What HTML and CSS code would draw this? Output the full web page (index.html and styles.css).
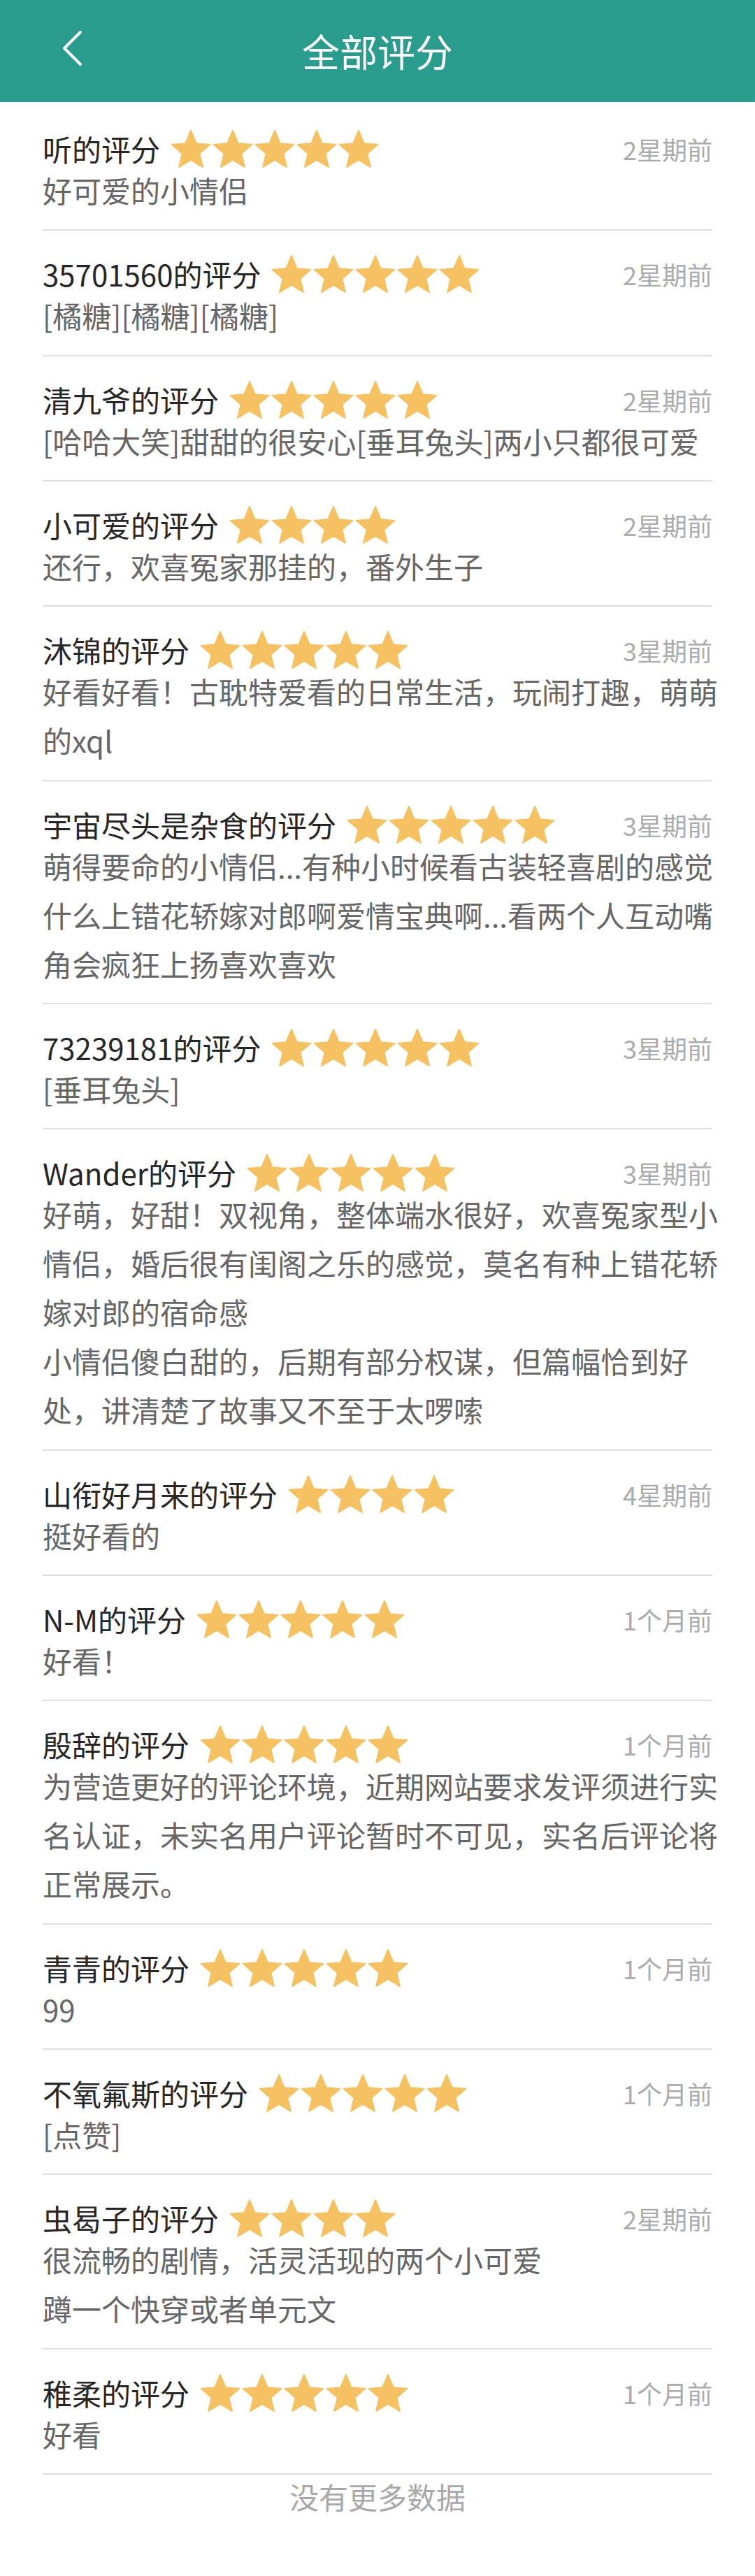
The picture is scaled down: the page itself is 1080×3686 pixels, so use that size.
FILE: index.html
```html
<!DOCTYPE html>
<html lang="zh-CN">
<head>
<meta charset="utf-8">
<title>全部评分</title>
<link rel="stylesheet" href="styles.css">
</head>
<body>
<svg width="0" height="0" class="defs" aria-hidden="true">
  <defs>
    <path id="star" d="M12 17.27L18.18 21l-1.64-7.03L22 9.24l-7.19-.61L12 2 9.19 8.63 2 9.24l5.46 4.73L5.82 21z"/>
  </defs>
</svg>
<header class="topbar">
  <div class="back">
    <svg width="40" height="60" viewBox="0 0 40 60"><polyline points="31,8 8,31 31,54" fill="none" stroke="#fff" stroke-width="4" stroke-linecap="round" stroke-linejoin="round"/></svg>
  </div>
  <h1 class="title">全部评分</h1>
  <div></div>
</header>

<main class="list">
  <div class="item">
    <div class="head"><span class="name">听的评分</span><span class="stars"><svg viewBox="1.2 1.4 21.6 20.2"><use href="#star"/></svg><svg viewBox="1.2 1.4 21.6 20.2"><use href="#star"/></svg><svg viewBox="1.2 1.4 21.6 20.2"><use href="#star"/></svg><svg viewBox="1.2 1.4 21.6 20.2"><use href="#star"/></svg><svg viewBox="1.2 1.4 21.6 20.2"><use href="#star"/></svg></span><span class="time">2星期前</span></div>
    <p class="content">好可爱的小情侣</p>
  </div>
  <div class="item">
    <div class="head"><span class="name">35701560的评分</span><span class="stars"><svg viewBox="1.2 1.4 21.6 20.2"><use href="#star"/></svg><svg viewBox="1.2 1.4 21.6 20.2"><use href="#star"/></svg><svg viewBox="1.2 1.4 21.6 20.2"><use href="#star"/></svg><svg viewBox="1.2 1.4 21.6 20.2"><use href="#star"/></svg><svg viewBox="1.2 1.4 21.6 20.2"><use href="#star"/></svg></span><span class="time">2星期前</span></div>
    <p class="content">[橘糖][橘糖][橘糖]</p>
  </div>
  <div class="item">
    <div class="head"><span class="name">清九爷的评分</span><span class="stars"><svg viewBox="1.2 1.4 21.6 20.2"><use href="#star"/></svg><svg viewBox="1.2 1.4 21.6 20.2"><use href="#star"/></svg><svg viewBox="1.2 1.4 21.6 20.2"><use href="#star"/></svg><svg viewBox="1.2 1.4 21.6 20.2"><use href="#star"/></svg><svg viewBox="1.2 1.4 21.6 20.2"><use href="#star"/></svg></span><span class="time">2星期前</span></div>
    <p class="content">[哈哈大笑]甜甜的很安心[垂耳兔头]两小只都很可爱</p>
  </div>
  <div class="item">
    <div class="head"><span class="name">小可爱的评分</span><span class="stars"><svg viewBox="1.2 1.4 21.6 20.2"><use href="#star"/></svg><svg viewBox="1.2 1.4 21.6 20.2"><use href="#star"/></svg><svg viewBox="1.2 1.4 21.6 20.2"><use href="#star"/></svg><svg viewBox="1.2 1.4 21.6 20.2"><use href="#star"/></svg></span><span class="time">2星期前</span></div>
    <p class="content">还行，欢喜冤家那挂的，番外生子</p>
  </div>
  <div class="item">
    <div class="head"><span class="name">沐锦的评分</span><span class="stars"><svg viewBox="1.2 1.4 21.6 20.2"><use href="#star"/></svg><svg viewBox="1.2 1.4 21.6 20.2"><use href="#star"/></svg><svg viewBox="1.2 1.4 21.6 20.2"><use href="#star"/></svg><svg viewBox="1.2 1.4 21.6 20.2"><use href="#star"/></svg><svg viewBox="1.2 1.4 21.6 20.2"><use href="#star"/></svg></span><span class="time">3星期前</span></div>
    <p class="content">好看好看！古耽特爱看的日常生活，玩闹打趣，萌萌的xql</p>
  </div>
  <div class="item">
    <div class="head"><span class="name">宇宙尽头是杂食的评分</span><span class="stars"><svg viewBox="1.2 1.4 21.6 20.2"><use href="#star"/></svg><svg viewBox="1.2 1.4 21.6 20.2"><use href="#star"/></svg><svg viewBox="1.2 1.4 21.6 20.2"><use href="#star"/></svg><svg viewBox="1.2 1.4 21.6 20.2"><use href="#star"/></svg><svg viewBox="1.2 1.4 21.6 20.2"><use href="#star"/></svg></span><span class="time">3星期前</span></div>
    <p class="content">萌得要命的小情侣...有种小时候看古装轻喜剧的感觉什么上错花轿嫁对郎啊爱情宝典啊...看两个人互动嘴角会疯狂上扬喜欢喜欢</p>
  </div>
  <div class="item">
    <div class="head"><span class="name">73239181的评分</span><span class="stars"><svg viewBox="1.2 1.4 21.6 20.2"><use href="#star"/></svg><svg viewBox="1.2 1.4 21.6 20.2"><use href="#star"/></svg><svg viewBox="1.2 1.4 21.6 20.2"><use href="#star"/></svg><svg viewBox="1.2 1.4 21.6 20.2"><use href="#star"/></svg><svg viewBox="1.2 1.4 21.6 20.2"><use href="#star"/></svg></span><span class="time">3星期前</span></div>
    <p class="content">[垂耳兔头]</p>
  </div>
  <div class="item">
    <div class="head"><span class="name">Wander的评分</span><span class="stars"><svg viewBox="1.2 1.4 21.6 20.2"><use href="#star"/></svg><svg viewBox="1.2 1.4 21.6 20.2"><use href="#star"/></svg><svg viewBox="1.2 1.4 21.6 20.2"><use href="#star"/></svg><svg viewBox="1.2 1.4 21.6 20.2"><use href="#star"/></svg><svg viewBox="1.2 1.4 21.6 20.2"><use href="#star"/></svg></span><span class="time">3星期前</span></div>
    <p class="content">好萌，好甜！双视角，整体端水很好，欢喜冤家型小情侣，婚后很有闺阁之乐的感觉，莫名有种上错花轿嫁对郎的宿命感<br>小情侣傻白甜的，后期有部分权谋，但篇幅恰到好处，讲清楚了故事又不至于太啰嗦</p>
  </div>
  <div class="item">
    <div class="head"><span class="name">山衔好月来的评分</span><span class="stars"><svg viewBox="1.2 1.4 21.6 20.2"><use href="#star"/></svg><svg viewBox="1.2 1.4 21.6 20.2"><use href="#star"/></svg><svg viewBox="1.2 1.4 21.6 20.2"><use href="#star"/></svg><svg viewBox="1.2 1.4 21.6 20.2"><use href="#star"/></svg></span><span class="time">4星期前</span></div>
    <p class="content">挺好看的</p>
  </div>
  <div class="item">
    <div class="head"><span class="name">N-M的评分</span><span class="stars"><svg viewBox="1.2 1.4 21.6 20.2"><use href="#star"/></svg><svg viewBox="1.2 1.4 21.6 20.2"><use href="#star"/></svg><svg viewBox="1.2 1.4 21.6 20.2"><use href="#star"/></svg><svg viewBox="1.2 1.4 21.6 20.2"><use href="#star"/></svg><svg viewBox="1.2 1.4 21.6 20.2"><use href="#star"/></svg></span><span class="time">1个月前</span></div>
    <p class="content">好看！</p>
  </div>
  <div class="item">
    <div class="head"><span class="name">殷辞的评分</span><span class="stars"><svg viewBox="1.2 1.4 21.6 20.2"><use href="#star"/></svg><svg viewBox="1.2 1.4 21.6 20.2"><use href="#star"/></svg><svg viewBox="1.2 1.4 21.6 20.2"><use href="#star"/></svg><svg viewBox="1.2 1.4 21.6 20.2"><use href="#star"/></svg><svg viewBox="1.2 1.4 21.6 20.2"><use href="#star"/></svg></span><span class="time">1个月前</span></div>
    <p class="content">为营造更好的评论环境，近期网站要求发评须进行实名认证，未实名用户评论暂时不可见，实名后评论将正常展示。</p>
  </div>
  <div class="item">
    <div class="head"><span class="name">青青的评分</span><span class="stars"><svg viewBox="1.2 1.4 21.6 20.2"><use href="#star"/></svg><svg viewBox="1.2 1.4 21.6 20.2"><use href="#star"/></svg><svg viewBox="1.2 1.4 21.6 20.2"><use href="#star"/></svg><svg viewBox="1.2 1.4 21.6 20.2"><use href="#star"/></svg><svg viewBox="1.2 1.4 21.6 20.2"><use href="#star"/></svg></span><span class="time">1个月前</span></div>
    <p class="content">99</p>
  </div>
  <div class="item">
    <div class="head"><span class="name">不氧氟斯的评分</span><span class="stars"><svg viewBox="1.2 1.4 21.6 20.2"><use href="#star"/></svg><svg viewBox="1.2 1.4 21.6 20.2"><use href="#star"/></svg><svg viewBox="1.2 1.4 21.6 20.2"><use href="#star"/></svg><svg viewBox="1.2 1.4 21.6 20.2"><use href="#star"/></svg><svg viewBox="1.2 1.4 21.6 20.2"><use href="#star"/></svg></span><span class="time">1个月前</span></div>
    <p class="content">[点赞]</p>
  </div>
  <div class="item">
    <div class="head"><span class="name">虫曷子的评分</span><span class="stars"><svg viewBox="1.2 1.4 21.6 20.2"><use href="#star"/></svg><svg viewBox="1.2 1.4 21.6 20.2"><use href="#star"/></svg><svg viewBox="1.2 1.4 21.6 20.2"><use href="#star"/></svg><svg viewBox="1.2 1.4 21.6 20.2"><use href="#star"/></svg></span><span class="time">2星期前</span></div>
    <p class="content">很流畅的剧情，活灵活现的两个小可爱<br>蹲一个快穿或者单元文</p>
  </div>
  <div class="item">
    <div class="head"><span class="name">稚柔的评分</span><span class="stars"><svg viewBox="1.2 1.4 21.6 20.2"><use href="#star"/></svg><svg viewBox="1.2 1.4 21.6 20.2"><use href="#star"/></svg><svg viewBox="1.2 1.4 21.6 20.2"><use href="#star"/></svg><svg viewBox="1.2 1.4 21.6 20.2"><use href="#star"/></svg><svg viewBox="1.2 1.4 21.6 20.2"><use href="#star"/></svg></span><span class="time">1个月前</span></div>
    <p class="content">好看</p>
  </div>
  <div class="nomore">没有更多数据</div>
</main>
</body>
</html>
```

FILE: styles.css
```css
* { box-sizing: border-box; }

html, body {
  margin: 0;
  padding: 0;
  background: #ffffff;
}

body {
  font-family: "Noto Sans CJK SC", "Noto Sans", sans-serif;
  color: #2b2b2b;
}

.defs {
  position: absolute;
  width: 0;
  height: 0;
  overflow: hidden;
}

.topbar {
  height: 146px;
  background: #2a9c8e;
  display: grid;
  grid-template-columns: 1fr auto 1fr;
  align-items: center;
}

.back {
  padding-left: 84px;
  display: flex;
  align-items: center;
  margin-bottom: 11px;
}

.back svg {
  display: block;
}

.title {
  margin: 0;
  font-size: 54px;
  font-weight: 400;
  color: #ffffff;
  line-height: 60px;
  letter-spacing: 0;
}

.list {
  padding-top: 5px;
}

.item {
  margin: 0 61px;
  padding: 38px 0 21.35px;
  border-bottom: 2px solid #e0e0e0;
}

.head {
  display: flex;
  align-items: center;
  height: 48px;
}

.name {
  font-size: 42px;
  line-height: 48px;
  color: #262626;
  white-space: nowrap;
  margin-right: 14px;
}

.stars {
  display: flex;
  align-items: center;
}

.stars svg {
  width: 60px;
  height: 56px;
  display: block;
  fill: #f6c261;
  stroke: #f6c261;
  stroke-width: 0.6;
  stroke-linejoin: round;
}

.time {
  margin-left: auto;
  font-size: 36px;
  line-height: 48px;
  color: #ababab;
  white-space: nowrap;
}

.content {
  margin: 0 -22px 0 0;
  font-size: 42px;
  line-height: 70px;
  color: #666666;
}

.nomore {
  text-align: center;
  font-size: 42px;
  line-height: 62px;
  color: #a8a8a8;
}
```
